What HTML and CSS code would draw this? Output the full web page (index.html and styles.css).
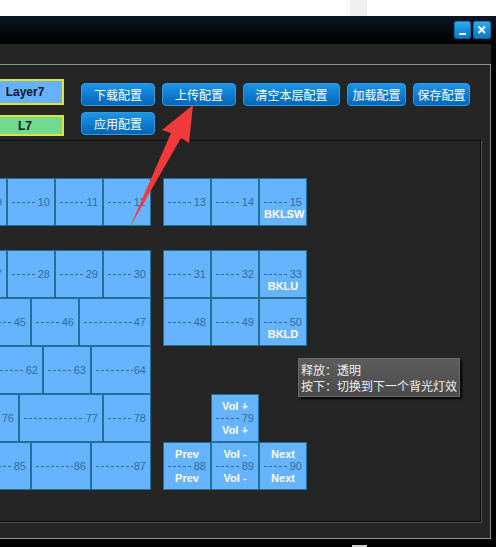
FILE: index.html
```html
<!DOCTYPE html>
<html lang="zh-CN">
<head>
<meta charset="utf-8">
<title>Layer config</title>
<link rel="stylesheet" href="styles.css">
</head>
<body>
<div class="topstrip"><div class="topstrip-patch"></div></div>
<div class="window">
  <div class="titlebar">
    <div class="winbtn winbtn-min">
      <svg width="17" height="18" viewBox="0 0 17 18"><rect x="5" y="12" width="7" height="2" fill="#fff"/></svg>
    </div>
    <div class="winbtn winbtn-close">
      <svg width="18" height="18" viewBox="0 0 18 18"><path d="M5.5 5.5 L12 12 M12 5.5 L5.5 12" stroke="#fff" stroke-width="2"/></svg>
    </div>
  </div>
  <div class="winbody">
    <div class="tabstrip"></div>
    <div class="frame">
      <div class="controls">
        <div class="layers">
          <div class="layer-name">Layer7</div>
          <div class="layer-tag">L7</div>
        </div>
        <div class="actions">
          <div class="action-row">
            <button class="btn w74">下载配置</button>
            <button class="btn w74">上传配置</button>
            <button class="btn w97">清空本层配置</button>
            <button class="btn w59">加载配置</button>
            <button class="btn w57">保存配置</button>
          </div>
          <div class="action-row">
            <button class="btn w74">应用配置</button>
          </div>
        </div>
      </div>
      <div class="keypanel">
        <div class="keyboard">
          <div class="main-block">
            <div class="krow">
              <div class="key u1"><span class="lbl"></span><span class="num"><i class="dash"></i>9</span><span class="lbl"></span></div>
              <div class="key u1"><span class="lbl"></span><span class="num"><i class="dash"></i>10</span><span class="lbl"></span></div>
              <div class="key u1"><span class="lbl"></span><span class="num"><i class="dash"></i>11</span><span class="lbl"></span></div>
              <div class="key u1"><span class="lbl"></span><span class="num"><i class="dash"></i>12</span><span class="lbl"></span></div>
            </div>
            <div class="krow-gap"></div>
            <div class="krow">
              <div class="key u1"><span class="lbl"></span><span class="num"><i class="dash"></i>27</span><span class="lbl"></span></div>
              <div class="key u1"><span class="lbl"></span><span class="num"><i class="dash"></i>28</span><span class="lbl"></span></div>
              <div class="key u1"><span class="lbl"></span><span class="num"><i class="dash"></i>29</span><span class="lbl"></span></div>
              <div class="key u1"><span class="lbl"></span><span class="num"><i class="dash"></i>30</span><span class="lbl"></span></div>
            </div>
            <div class="krow">
              <div class="key u1"><span class="lbl"></span><span class="num"><i class="dash"></i>45</span><span class="lbl"></span></div>
              <div class="key u1"><span class="lbl"></span><span class="num"><i class="dash"></i>46</span><span class="lbl"></span></div>
              <div class="key u150"><span class="lbl"></span><span class="num"><i class="dash"></i>47</span><span class="lbl"></span></div>
            </div>
            <div class="krow">
              <div class="key u1"><span class="lbl"></span><span class="num"><i class="dash"></i>62</span><span class="lbl"></span></div>
              <div class="key u1"><span class="lbl"></span><span class="num"><i class="dash"></i>63</span><span class="lbl"></span></div>
              <div class="key u125"><span class="lbl"></span><span class="num"><i class="dash"></i>64</span><span class="lbl"></span></div>
            </div>
            <div class="krow">
              <div class="key u1"><span class="lbl"></span><span class="num"><i class="dash"></i>76</span><span class="lbl"></span></div>
              <div class="key u175"><span class="lbl"></span><span class="num"><i class="dash"></i>77</span><span class="lbl"></span></div>
              <div class="key u1"><span class="lbl"></span><span class="num"><i class="dash"></i>78</span><span class="lbl"></span></div>
            </div>
            <div class="krow">
              <div class="key u1"><span class="lbl"></span><span class="num"><i class="dash"></i>85</span><span class="lbl"></span></div>
              <div class="key u125"><span class="lbl"></span><span class="num"><i class="dash"></i>86</span><span class="lbl"></span></div>
              <div class="key u125"><span class="lbl"></span><span class="num"><i class="dash"></i>87</span><span class="lbl"></span></div>
            </div>
          </div>
          <div class="side-block">
            <div class="krow">
              <div class="key u1"><span class="lbl"></span><span class="num"><i class="dash"></i>13</span><span class="lbl"></span></div>
              <div class="key u1"><span class="lbl"></span><span class="num"><i class="dash"></i>14</span><span class="lbl"></span></div>
              <div class="key u1"><span class="lbl"></span><span class="num"><i class="dash"></i>15</span><span class="lbl">BKLSW</span></div>
            </div>
            <div class="krow-gap"></div>
            <div class="krow">
              <div class="key u1"><span class="lbl"></span><span class="num"><i class="dash"></i>31</span><span class="lbl"></span></div>
              <div class="key u1"><span class="lbl"></span><span class="num"><i class="dash"></i>32</span><span class="lbl"></span></div>
              <div class="key u1"><span class="lbl"></span><span class="num"><i class="dash"></i>33</span><span class="lbl">BKLU</span></div>
            </div>
            <div class="krow">
              <div class="key u1"><span class="lbl"></span><span class="num"><i class="dash"></i>48</span><span class="lbl"></span></div>
              <div class="key u1"><span class="lbl"></span><span class="num"><i class="dash"></i>49</span><span class="lbl"></span></div>
              <div class="key u1"><span class="lbl"></span><span class="num"><i class="dash"></i>50</span><span class="lbl">BKLD</span></div>
            </div>
            <div class="krow"></div>
            <div class="krow">
              <div class="key-space"></div>
              <div class="key u1"><span class="lbl">Vol +</span><span class="num"><i class="dash"></i>79</span><span class="lbl">Vol +</span></div>
              <div class="key-space"></div>
            </div>
            <div class="krow">
              <div class="key u1"><span class="lbl">Prev</span><span class="num"><i class="dash"></i>88</span><span class="lbl">Prev</span></div>
              <div class="key u1"><span class="lbl">Vol -</span><span class="num"><i class="dash"></i>89</span><span class="lbl">Vol -</span></div>
              <div class="key u1"><span class="lbl">Next</span><span class="num"><i class="dash"></i>90</span><span class="lbl">Next</span></div>
            </div>
          </div>
        </div>
      </div>
    </div>
  </div>
</div>
<div class="bottomstrip"><div class="bottomstrip-patch"></div></div>

<div class="tooltip">
  <div class="tip-line">释放：透明</div>
  <div class="tip-line">按下：切换到下一个背光灯效</div>
</div>

<svg class="arrow" width="496" height="547" viewBox="0 0 496 547">
  <polygon points="193,105 189,143 181,138 130,227 171,133 162,130" fill="#f23a3a"/>
</svg>
</body>
</html>
```

FILE: styles.css
```css
html, body {
  margin: 0;
  padding: 0;
}

body {
  width: 496px;
  height: 547px;
  overflow: hidden;
  background: #000;
  font-family: "Liberation Sans", Arial, sans-serif;
  position: relative;
}

.topstrip {
  height: 16px;
  background: #fff;
  display: flex;
}

.topstrip-patch {
  margin-left: 350px;
  width: 17px;
  height: 16px;
  background: #f0f0f0;
}

.window {
  width: 496px;
  background: #000;
}

.titlebar {
  height: 28px;
  box-sizing: border-box;
  padding: 5px 5px 0 0;
  display: flex;
  justify-content: flex-end;
  align-items: flex-start;
  gap: 2px;
  background: linear-gradient(#0b1823 0%, #03080c 55%, #000 100%);
}

.winbtn {
  height: 18px;
  box-sizing: border-box;
  border-radius: 3px;
  background: linear-gradient(#36adef 0%, #1690dc 50%, #0a78c8 100%);
  box-shadow: inset 0 0 0 1px rgba(10, 80, 140, 0.6);
  display: flex;
}

.winbtn svg {
  display: block;
}

.winbtn-min {
  width: 17px;
}

.winbtn-close {
  width: 18px;
}

.winbody {
  width: 491px;
  height: 495px;
  background: #252525;
}

.tabstrip {
  height: 20px;
}

.frame {
  width: 491px;
  height: 475px;
  box-sizing: border-box;
  border-top: 1px solid #8e8e8e;
  border-right: 1px solid #8e8e8e;
  border-bottom: 1px solid #8e8e8e;
}

.controls {
  height: 75px;
  display: flex;
  align-items: flex-start;
}

.layers {
  margin-left: -14px;
  width: 78px;
  padding-top: 14px;
  display: flex;
  flex-direction: column;
  flex-shrink: 0;
}

.layer-name,
.layer-tag {
  box-sizing: border-box;
  border: 2px solid #e3e32a;
  font-weight: bold;
  font-size: 12px;
  color: #0a1622;
  display: flex;
  align-items: center;
  justify-content: center;
}

.layer-name {
  height: 26px;
  background: #66b2ff;
}

.layer-tag {
  margin-top: 10px;
  height: 21px;
  background: #72d98f;
}

.actions {
  margin-left: 17px;
  padding-top: 18px;
  display: flex;
  flex-direction: column;
  gap: 6px;
}

.action-row {
  display: flex;
  gap: 7px;
}

.btn {
  height: 23px;
  box-sizing: border-box;
  padding: 0;
  margin: 0;
  border: 1px solid #2f9be0;
  border-radius: 4px;
  background: linear-gradient(#1e95e6 0%, #0f7dd0 50%, #0665b5 100%);
  box-shadow: 0 0 0 1px rgba(0, 40, 80, 0.35);
  color: #fff;
  font-family: "Noto Sans CJK SC", "Liberation Sans", sans-serif;
  font-size: 12px;
  line-height: 21px;
  text-align: center;
}

.w74 { width: 74px; }
.w97 { width: 97px; }
.w59 { width: 59px; }
.w57 { width: 57px; }

.keypanel {
  margin-left: -1px;
  width: 482px;
  height: 382px;
  box-sizing: border-box;
  border: 1px solid #0d0d0d;
  box-shadow: 1px 1px 0 #505050;
}

.keyboard {
  padding-top: 37px;
  display: flex;
}

.main-block {
  width: 151px;
  flex-shrink: 0;
}

.side-block {
  margin-left: 12px;
  width: 144px;
  flex-shrink: 0;
}

.krow {
  height: 48px;
  display: flex;
  justify-content: flex-end;
}

.side-block .krow {
  justify-content: flex-start;
}

.krow-gap {
  height: 24px;
}

.key {
  box-sizing: border-box;
  height: 48px;
  flex-shrink: 0;
  border: 1px solid #23709b;
  background: #66b3ff;
  padding: 0 4px;
  display: flex;
  flex-direction: column;
  justify-content: center;
}

.key-space {
  width: 48px;
  height: 48px;
  flex-shrink: 0;
}

.u1 { width: 48px; }
.u125 { width: 60px; }
.u150 { width: 72px; }
.u175 { width: 84px; }

.lbl {
  height: 12px;
  line-height: 12px;
  text-align: center;
  font-size: 11px;
  font-weight: bold;
  color: #fff;
  white-space: nowrap;
}

.num {
  height: 12px;
  line-height: 12px;
  display: flex;
  align-items: center;
  font-size: 11px;
  color: #2b70a2;
}

.dash {
  flex: 1;
  height: 1px;
  margin-right: 1px;
  background: repeating-linear-gradient(to right, #2b70a2 0 3px, transparent 3px 5px);
}

.bottomstrip {
  height: 8px;
  background: #000;
  display: flex;
  align-items: flex-end;
}

.bottomstrip-patch {
  margin-left: 352px;
  width: 15px;
  height: 2px;
  background: #cfcfcf;
}

.tooltip {
  position: absolute;
  left: 298px;
  top: 358px;
  width: 162px;
  height: 39px;
  box-sizing: border-box;
  padding: 3px 0 0 2px;
  border: 1px solid #6a6a6a;
  background: linear-gradient(#5d5d5d, #4b4b4b);
  box-shadow: 2px 2px 2px rgba(0, 0, 0, 0.85);
  color: #eeeeee;
  font-family: "Noto Sans CJK SC", "Liberation Sans", sans-serif;
  font-size: 12px;
  line-height: 16px;
  white-space: nowrap;
}

.arrow {
  position: absolute;
  left: 0;
  top: 0;
  pointer-events: none;
}
```
